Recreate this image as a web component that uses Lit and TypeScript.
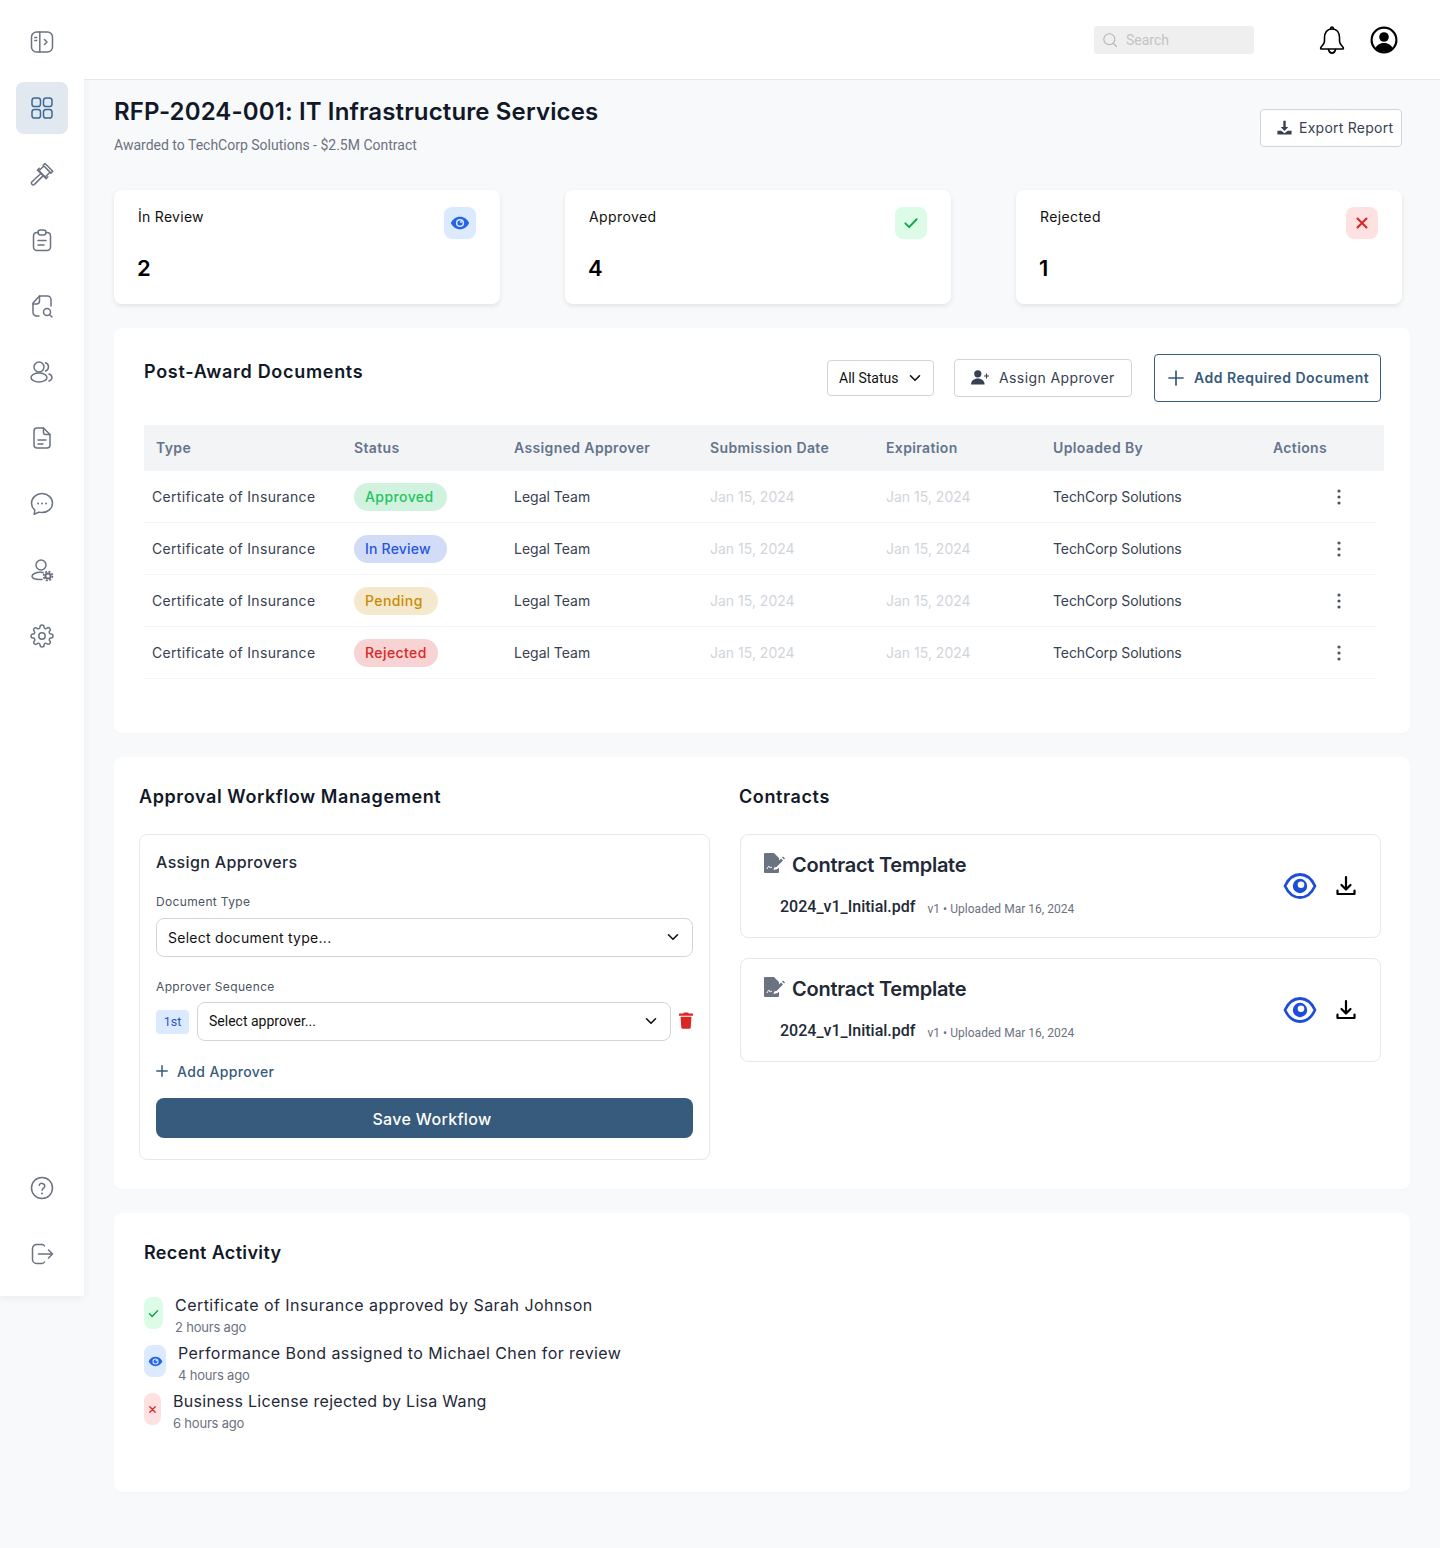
import { LitElement, html, css, svg } from "lit";
import { customElement } from "lit/decorators.js";

const ic = (size: number, vb: string, body: unknown, cls = "") =>
  html`<svg class=${cls} width=${size} height=${size} viewBox=${vb} fill="none" stroke="currentColor" stroke-width="1.5" stroke-linecap="round" stroke-linejoin="round">${body}</svg>`;

const sideIcons = {
  toggle: svg`<rect x="1.500" y="2" width="21" height="20" rx="5"/><path d="M9.800 2v20"/><path d="M4.800 7.500h1.800M4.800 10.500h1.800" /><path d="M14.500 9.500l2.500 2.500-2.500 2.500"/>`,
  grid: svg`<rect x="2" y="2" width="8.500" height="8.500" rx="2.600"/><rect x="13.500" y="2" width="8.500" height="8.500" rx="2.600"/><rect x="2" y="13.500" width="8.500" height="8.500" rx="2.600"/><rect x="13.500" y="13.500" width="8.500" height="8.500" rx="2.600"/>`,
  gavel: svg`<path d="M15 1.500l7.800 7.800-1.800 1.800-7.800-7.800z"/><path d="M13.300 4.500L9 8.800l6.200 6.200 4.300-4.300"/><path d="M7.500 8l8.600 8.600 1.800-1.800"/><path d="M7.500 8L9.300 6.200"/><path d="M10.800 11.500L1.800 20a1.800 1.800 0 0 0 2.400 2.600l8.800-8.700"/>`,
  clip: svg`<path d="M8 4.600H7A3.500 3.500 0 0 0 3.500 8v11A3.500 3.500 0 0 0 7 22.500h10a3.500 3.500 0 0 0 3.500-3.500V8A3.500 3.500 0 0 0 17 4.600h-1"/><rect x="8" y="2" width="8" height="5" rx="2.400"/><path d="M8 12.500h8M8 17h6"/>`,
  docsearch: svg`<path d="M9 22H6.500A3.500 3.500 0 0 1 3 18.500V9l6.500-7h8A3.500 3.500 0 0 1 21 5.500V12"/><path d="M3 10h3.500A3 3 0 0 0 9.500 7V2"/><circle cx="17" cy="18" r="3.500"/><path d="M20 21l2 2"/>`,
  users: svg`<circle cx="9" cy="7" r="5"/><ellipse cx="9" cy="17.500" rx="8" ry="4.500"/><path d="M15.500 2.800a4.500 4.500 0 0 1 3 4.200 4.500 4.500 0 0 1-3 4"/><path d="M19 14a4 4 0 0 1 3 3.500 4 4 0 0 1-3 3.500"/>`,
  doc: svg`<path d="M13.500 2H7a3 3 0 0 0-3 3v14a3 3 0 0 0 3 3h10a3 3 0 0 0 3-3V8.500z"/><path d="M13.500 2v4.500a2 2 0 0 0 2 2H20"/><path d="M8 14h8M8 18h5"/>`,
  chat: svg`<path d="M12 1.500C6.200 1.500 1.500 5.800 1.500 11.200c0 2.800 1.300 5.100 3.300 6.800l-.6 4.200 4.800-2.100c1 .3 1.900.4 3 .4 5.800 0 10.500-4 10.500-9.300S17.800 1.500 12 1.500z"/><path d="M8 11.500h.1M12 11.500h.1M16 11.500h.1" stroke-width="1.800"/>`,
  usergear: svg`<circle cx="11" cy="7" r="5"/><path d="M13 14.500c-1-.2-1.700-.2-2.500-.2-4.500 0-8.500 1.800-8.500 4 0 2 3 3.200 8 3.200h2"/><circle cx="18" cy="18" r="2.600" stroke-width="2"/><circle cx="18" cy="18" r="4.400" stroke-width="1.700" stroke-dasharray="2 1.450" stroke-linecap="butt"/>`,
  gear: svg`<circle cx="12" cy="12" r="3.200"/><path d="M19.400 15a1.650 1.650 0 0 0 .33 1.820l.06.06a2 2 0 0 1 0 2.830 2 2 0 0 1-2.830 0l-.06-.06a1.650 1.650 0 0 0-1.820-.33 1.650 1.650 0 0 0-1 1.510V21a2 2 0 0 1-2 2 2 2 0 0 1-2-2v-.09A1.650 1.650 0 0 0 9 19.400a1.650 1.650 0 0 0-1.820.33l-.06.06a2 2 0 0 1-2.830 0 2 2 0 0 1 0-2.830l.06-.06a1.650 1.650 0 0 0 .33-1.820 1.650 1.650 0 0 0-1.510-1H3a2 2 0 0 1-2-2 2 2 0 0 1 2-2h.09A1.650 1.650 0 0 0 4.600 9a1.650 1.650 0 0 0-.33-1.820l-.06-.06a2 2 0 0 1 0-2.830 2 2 0 0 1 2.830 0l.06.06a1.650 1.650 0 0 0 1.820.33H9a1.650 1.650 0 0 0 1-1.510V3a2 2 0 0 1 2-2 2 2 0 0 1 2 2v.09a1.650 1.650 0 0 0 1 1.510 1.650 1.650 0 0 0 1.820-.33l.06-.06a2 2 0 0 1 2.830 0 2 2 0 0 1 0 2.830l-.06.06a1.650 1.650 0 0 0-.33 1.820V9a1.650 1.650 0 0 0 1.510 1H21a2 2 0 0 1 2 2 2 2 0 0 1-2 2h-.09a1.650 1.650 0 0 0-1.510 1z"/>`,
  help: svg`<circle cx="12" cy="12" r="10.500"/><path d="M9.200 9.200a2.900 2.900 0 0 1 5.600 1c0 1.900-2.800 2.300-2.800 4"/><path d="M12 17.500h.01" stroke-width="2"/>`,
  logout: svg`<path d="M12 2.500H6.500A4 4 0 0 0 2.500 6.500v11a4 4 0 0 0 4 4H12a3 3 0 0 0 2.500-1.500"/><path d="M14.500 4a3 3 0 0 0-2.500-1.500"/><path d="M8.500 12h14M18.500 8l4 4-4 4"/>`,
};

const eyeSolid = (s: number) => html`<svg width=${s} height=${s} viewBox="0 0 24 24"><path fill="currentColor" fill-rule="evenodd" d="M12 4.500c5 0 9 3.200 11 7.500-2 4.300-6 7.500-11 7.500S3 16.300 1 12c2-4.300 6-7.500 11-7.500zm0 2.600a4.900 4.900 0 1 0 0 9.800 4.900 4.900 0 0 0 0-9.800z"/><circle cx="12" cy="12" r="3.100" fill="currentColor"/><circle cx="13.200" cy="10.800" r="1.200" fill="#dbeafe"/></svg>`;
const check = (s: number) => html`<svg width=${s} height=${s} viewBox="0 0 24 24" fill="none" stroke="currentColor" stroke-width="2.600" stroke-linecap="round" stroke-linejoin="round"><path d="M4.500 12.500l5 5 10-10.500"/></svg>`;
const cross = (s: number) => html`<svg width=${s} height=${s} viewBox="0 0 24 24" fill="none" stroke="currentColor" stroke-width="2.800" stroke-linecap="round"><path d="M6 6l12 12M18 6L6 18"/></svg>`;
const chevron = html`<svg class="chev" width="12" height="12" viewBox="0 0 12 12" fill="none" stroke="currentColor" stroke-width="1.600" stroke-linecap="round" stroke-linejoin="round"><path d="M1.500 3.800 6 8.300l4.500-4.500"/></svg>`;

const rows = [
  ["Approved", "approved"],
  ["In Review", "review"],
  ["Pending", "pending"],
  ["Rejected", "rejected"],
];

@customElement("app-root")
export class AppRoot extends LitElement {
  static styles = css`
    :host { display: block; width: 1440px; min-height: 1548px; background: #f8f9fb; font-family: Inter, "Liberation Sans", sans-serif; color: #1f2937; }
    * { box-sizing: border-box; }
    .page { display: flex; align-items: flex-start; }
    aside { width: 84px; height: 1296px; background: #fff; box-shadow: 0 2px 8px rgba(0,0,0,.06); padding: 16px; display: flex; flex-direction: column; justify-content: space-between; flex: none; position: relative; z-index: 1; }
    .side-group { display: flex; flex-direction: column; gap: 14px; }
    .side { width: 52px; height: 52px; border-radius: 8px; display: flex; align-items: center; justify-content: center; color: #6b7280; }
    .side.active { background: #e2e8f0; color: #3b6a96; }
    main { flex: 1; min-width: 0; }
    header { height: 80px; background: #fff; border-bottom: 1px solid #e5e7eb; display: flex; align-items: center; padding-left: 1010px; position: relative; z-index: 2; }
    .search { width: 160px; height: 28px; background: #efefef; border-radius: 4px; display: flex; align-items: center; gap: 9px; padding-left: 9px; color: #c4c4c4; font-family: Roboto, sans-serif; font-size: 14px; }
    .search svg { color: #b5b5b5; }
    .bell { margin-left: 64px; display: flex; color: #000; }
    .avatar { margin-left: 24px; display: flex; color: #000; }
    .content { padding: 13px 30px 56px; }
    .head { display: flex; justify-content: space-between; align-items: flex-start; padding-right: 8px; height: 70px; }
    h1 { margin: 1px 0 0; font-size: 24px; line-height: 36px; font-weight: 600; color: #111827; letter-spacing: .13px; }
    .sub { margin-top: 6px; font-family: Roboto, sans-serif; font-size: 14px; line-height: 18px; color: #6b7280; }
    .export { width: 142px; height: 38px; margin-top: 16px; border: 1px solid #d1d5db; border-radius: 4px; background: #fff; display: flex; align-items: center; gap: 6px; padding: 0 0 2px 15px; color: #374151; font-size: 14px; letter-spacing: .25px; }
    .stats { display: grid; grid-template-columns: 386px 386px 386px; gap: 65px; margin-top: 27px; }
    .stat { height: 114px; background: #fff; border-radius: 8px; box-shadow: 0 2px 5px rgba(0,0,0,.09); padding: 17px 24px 0; display: flex; justify-content: space-between; align-items: flex-start; }
    .stat .lab { font-size: 14px; line-height: 20px; color: #111; letter-spacing: .4px; }
    .stat .lab.first { letter-spacing: .28px; }
    .stat .num { margin: 29px 0 0 -1px; font-size: 22px; line-height: 24px; font-weight: 600; color: #000; }
    .badge { width: 32px; height: 32px; border-radius: 8px; display: flex; align-items: center; justify-content: center; }
    .blue { background: #dbeafe; color: #2563eb; }
    .green { background: #dcfce7; color: #16a34a; }
    .red { background: #fee2e2; color: #dc2626; }
    .panel { background: #fff; border-radius: 8px; box-shadow: 0 1px 2px rgba(0,0,0,.025); }
    .docs { margin-top: 24px; height: 405px; padding: 26px 29px 0 30px; }
    .docs-head { display: flex; justify-content: space-between; align-items: flex-start; height: 48px; }
    h2 { margin: 0; font-size: 18px; line-height: 28px; font-weight: 600; color: #111827; letter-spacing: .6px; }
    .docs-head h2 { margin-top: 4px; letter-spacing: .7px; }
    .actions { display: flex; align-items: center; gap: 20px; height: 48px; }
    .btn { display: flex; align-items: center; border: 1px solid #d1d5db; border-radius: 4px; background: #fff; font-size: 14px; padding-bottom: 1px; }
    .allstatus { width: 107px; height: 36px; padding: 0 12px 0 11px; justify-content: space-between; color: #111; font-family: Roboto, sans-serif; }
    .assign { width: 178px; height: 38px; padding-left: 16px; gap: 9px; color: #374151; letter-spacing: .4px; }
    .add { width: 227px; height: 48px; margin-left: 2px; padding-left: 12px; gap: 9px; border-color: #365b7c; color: #365b7c; font-weight: 600; letter-spacing: .5px; }
    .table { margin-top: 23px; width: 1240px; }
    .tr { display: grid; grid-template-columns: 210px 160px 196px 176px 167px 220px 1fr; align-items: center; }
    .th { height: 46px; background: #f3f4f6; font-size: 14px; font-weight: 600; color: #64748b; letter-spacing: .37px; padding-bottom: 2px; }
    .th > div:first-child { padding-left: 12px; }
    .td { width: 1232px; height: 52px; border-bottom: 1px solid #f3f4f6; font-size: 14px; color: #374151; letter-spacing: .32px; }
    .td > div:first-child { padding-left: 8px; }
    .legal { letter-spacing: 0; }
    .by { letter-spacing: -.08px; }
    .date { color: #d1d5db; letter-spacing: 0; }
    .pill { height: 28px; border-radius: 14px; display: flex; align-items: center; padding-left: 11px; font-size: 14px; font-weight: 500; letter-spacing: .42px; }
    .pill.approved { width: 93px; background: #d1f2df; color: #22c55e; }
    .pill.review { width: 93px; background: #d3dcf7; color: #2556e0; letter-spacing: .2px; }
    .pill.pending { width: 84px; background: #f5e9cd; color: #ca8a04; }
    .pill.rejected { width: 84px; background: #f8d3d3; color: #dc2626; }
    .kebab { padding-left: 58px; display: flex; color: #4b5563; }
    .workflow { margin-top: 24px; height: 432px; padding: 26px 29px 0 25px; display: grid; grid-template-columns: 571px 641px; gap: 30px; }
    .wf-col h2 { height: 28px; margin-bottom: 23px; }
    .contracts-col h2 { margin-left: -1px; }
    .box { border: 1px solid #e5e7eb; border-radius: 8px; background: #fff; }
    .approvers { height: 326px; padding: 15px 16px 16px; }
    h3 { margin: 0; font-size: 16px; line-height: 24px; font-weight: 500; color: #1f2937; letter-spacing: .35px; }
    label { display: block; font-size: 12px; line-height: 16px; color: #4b5563; letter-spacing: .35px; }
    .l1 { margin-top: 20px; }
    .l2 { margin-top: 22px; }
    .select { height: 39px; border: 1px solid #d1d5db; border-radius: 8px; display: flex; align-items: center; justify-content: space-between; padding: 0 13px 1px 11px; font-size: 14px; color: #111; letter-spacing: .27px; background: #fff; }
    .s1 { margin-top: 8px; }
    .seq { display: flex; align-items: center; margin-top: 7px; }
    .ord { flex: none; width: 33px; height: 24px; background: #dbeafe; border-radius: 4px; color: #2d55c8; font-family: Roboto, sans-serif; font-size: 12.500px; display: flex; align-items: center; justify-content: center; margin-right: 8px; }
    .seq .select { flex: none; width: 474px; padding-right: 13px; font-family: Roboto, sans-serif; letter-spacing: 0; }
    .trash { flex: none; margin-left: 8px; margin-bottom: 3px; display: flex; color: #dc2626; }
    .addappr { display: flex; align-items: center; gap: 9px; margin-top: 20px; height: 20px; color: #365b7c; font-size: 14px; font-weight: 500; letter-spacing: .38px; }
    .save { margin-top: 17px; height: 40px; border-radius: 8px; background: #365b7c; color: #fff; display: flex; align-items: center; justify-content: center; padding: 1px 0 0 15px; font-size: 16px; font-weight: 500; letter-spacing: .33px; }
    .cards { display: flex; flex-direction: column; gap: 20px; }
    .contract { height: 104px; padding: 17px 22px 0 23px; display: flex; justify-content: space-between; }
    .c-title { display: flex; align-items: flex-start; gap: 6px; }
    .c-name { font-size: 20px; line-height: 28px; font-weight: 600; color: #1f2937; margin-top: -1px; letter-spacing: -.25px; }
    .c-file { display: flex; align-items: baseline; margin-left: 16px; margin-top: 16px; font-family: Roboto, sans-serif; }
    .fname { font-size: 16px; line-height: 24px; font-weight: 500; color: #1f2937; }
    .meta { margin-left: 12px; font-size: 12px; color: #6b7280; position: relative; top: 1px; letter-spacing: .03px; }
    .c-actions { display: flex; align-items: center; gap: 17px; height: 68px; }
    .eye { display: flex; color: #1d4ed8; }
    .dl { display: flex; color: #000; }
    .recent { margin-top: 24px; height: 279px; padding: 26px 30px 0; }
    .recent h2 { letter-spacing: .35px; }
    .feed { margin-top: 29px; display: flex; flex-direction: column; gap: 0; }
    .item { display: flex; align-items: flex-start; height: 48px; gap: 12px; }
    .dot { height: 32px; border-radius: 8px; display: flex; align-items: center; justify-content: center; margin-top: 1px; }
    .i-txt { font-size: 16px; line-height: 18px; color: #1f2937; letter-spacing: .42px; }
    .i-txt.t1 { letter-spacing: .46px; }
    .i-txt.t3 { letter-spacing: .29px; }
    .i-sub { margin-top: 4px; font-size: 13px; line-height: 18px; color: #6b7280; letter-spacing: -.2px; }
  `;

  private side(icon: unknown, active = false) {
    return html`<div class="side ${active ? "active" : ""}">${ic(24, "0 0 24 24", icon)}</div>`;
  }

  private download(s: number) {
    return html`<svg width=${s} height=${s} viewBox="0 0 24 24" fill="none" stroke="currentColor" stroke-width="2.200" stroke-linecap="round" stroke-linejoin="round"><path d="M12 3v12M7.500 11l4.500 4.500 4.500-4.500"/><path d="M3.500 16.500v3.500h17v-3.500"/></svg>`;
  }

  private contract() {
    return html`<div class="box contract">
      <div>
        <div class="c-title">
          <svg width="22" height="22" viewBox="0 0 22 22" fill="#6b7280"><path d="M1 1h9l5 5v3.500l-4.500 4.500-1 4 4-1 1.500-1.500V20a1 1 0 0 1-1 1H1a1 1 0 0 1-1-1V2a1 1 0 0 1 1-1z"/><path d="M17 6.500l2 2-6.500 6.500-2.500.5.500-2.500zM18 5.500l1-1 2 2-1 1z"/><path d="M3 17c1-2 1.500-3 2-3s.5 2 1 2 1-1 2-1" fill="none" stroke="#fff" stroke-width="1"/></svg>
          <div class="c-name">Contract Template</div>
        </div>
        <div class="c-file"><span class="fname">2024_v1_Initial.pdf</span><span class="meta">v1 • Uploaded Mar 16, 2024</span></div>
      </div>
      <div class="c-actions">
        <span class="eye"><svg width="34" height="34" viewBox="0 0 34 34"><path fill="none" stroke="currentColor" stroke-width="2.800" stroke-linejoin="round" d="M2 17C5.500 9.500 10.500 5.500 17 5.500S28.500 9.500 32 17c-3.500 7.500-8.500 11.500-15 11.500S5.500 24.500 2 17z"/><circle cx="17" cy="17" r="7.200" fill="currentColor"/><circle cx="18" cy="15.800" r="3.300" fill="#fff"/></svg></span>
        <span class="dl">${this.download(24)}</span>
      </div>
    </div>`;
  }

  private feedItem(cls: string, w: number, icon: unknown, text: string, sub: string, tcls: string) {
    return html`<div class="item"><span class="dot ${cls}" style="width:${w}px">${icon}</span><div><div class="i-txt ${tcls}">${text}</div><div class="i-sub">${sub}</div></div></div>`;
  }

  render() {
    return html`<div class="page">
      <aside>
        <div class="side-group">
          ${this.side(sideIcons.toggle)}
          ${this.side(sideIcons.grid, true)}
          ${this.side(sideIcons.gavel)}
          ${this.side(sideIcons.clip)}
          ${this.side(sideIcons.docsearch)}
          ${this.side(sideIcons.users)}
          ${this.side(sideIcons.doc)}
          ${this.side(sideIcons.chat)}
          ${this.side(sideIcons.usergear)}
          ${this.side(sideIcons.gear)}
        </div>
        <div class="side-group">
          ${this.side(sideIcons.help)}
          ${this.side(sideIcons.logout)}
        </div>
      </aside>
      <main>
        <header>
          <div class="search">
            <svg width="14" height="14" viewBox="0 0 14 14" fill="none" stroke="currentColor" stroke-width="1.100" stroke-linecap="round"><circle cx="6.300" cy="6.300" r="5.500"/><path d="M10.500 10.500l3 3"/></svg>
            <span>Search</span>
          </div>
          <span class="bell"><svg width="28" height="28" viewBox="0 0 28 28" fill="none" stroke="currentColor" stroke-width="1.600" stroke-linejoin="round" stroke-linecap="round"><path d="M14 3C8.500 3 6.500 7.500 6.500 11.500V15C6.500 18 4 20 2.800 21.500 2.300 22.200 2.800 23 3.600 23H24.400C25.200 23 25.700 22.200 25.200 21.500 24 20 21.500 18 21.500 15V11.500C21.500 7.500 19.500 3 14 3z"/><path d="M12.600 3c0-2.600 2.800-2.600 2.800 0"/><path d="M10.500 23.500c.5 2.400 2 3.600 3.500 3.600s3-1.200 3.500-3.600"/></svg></span>
          <span class="avatar"><svg width="28" height="28" viewBox="0 0 28 28"><circle cx="14" cy="14" r="12.400" fill="none" stroke="currentColor" stroke-width="2.200"/><circle cx="14" cy="11" r="4.800" fill="currentColor"/><path d="M5.500 22c1.500-3.500 5-5 8.500-5s7 1.500 8.500 5c-2 2.500-5 3.500-8.500 3.500S7.500 24.500 5.500 22z" fill="currentColor"/></svg></span>
        </header>
        <div class="content">
          <div class="head">
            <div>
              <h1>RFP-2024-001: IT Infrastructure Services</h1>
              <div class="sub">Awarded to TechCorp Solutions - $2.5M Contract</div>
            </div>
            <div class="export">
              <svg width="17" height="17" viewBox="0 0 24 24" fill="currentColor"><path d="M10.300 2.500h3.400v8.700h3.700L12 17l-5.400-5.800h3.700z"/><path d="M2 16.500h5.500l4.500 3.500 4.500-3.500H22V22H2z"/></svg>
              <span>Export Report</span>
            </div>
          </div>

          <div class="stats">
            <div class="stat"><div><div class="lab first">İn Review</div><div class="num">2</div></div><div class="badge blue">${eyeSolid(20)}</div></div>
            <div class="stat"><div><div class="lab">Approved</div><div class="num">4</div></div><div class="badge green">${check(18)}</div></div>
            <div class="stat"><div><div class="lab">Rejected</div><div class="num">1</div></div><div class="badge red">${cross(18)}</div></div>
          </div>

          <section class="panel docs">
            <div class="docs-head">
              <h2>Post-Award Documents</h2>
              <div class="actions">
                <div class="btn allstatus"><span>All Status</span>${chevron}</div>
                <div class="btn assign">
                  <svg width="19" height="15" viewBox="0 0 19 15" fill="currentColor"><circle cx="6.800" cy="3.800" r="3.600"/><path d="M0 14.500c0-3.800 3-6 6.800-6s6.800 2.200 6.800 6z"/><path d="M15.500 3.500v5M13 6h5" stroke="currentColor" stroke-width="1.200" fill="none"/></svg>
                  <span>Assign Approver</span>
                </div>
                <div class="btn add">
                  <svg width="18" height="18" viewBox="0 0 18 18" fill="none" stroke="currentColor" stroke-width="1.700" stroke-linecap="round"><path d="M9 2v14M2 9h14"/></svg>
                  <span>Add Required Document</span>
                </div>
              </div>
            </div>
            <div class="table">
              <div class="tr th"><div>Type</div><div>Status</div><div>Assigned Approver</div><div>Submission Date</div><div>Expiration</div><div>Uploaded By</div><div>Actions</div></div>
              ${rows.map(([label, cls]) => html`<div class="tr td">
                <div>Certificate of Insurance</div>
                <div><span class="pill ${cls}">${label}</span></div>
                <div class="legal">Legal Team</div>
                <div class="date">Jan 15, 2024</div>
                <div class="date">Jan 15, 2024</div>
                <div class="by">TechCorp Solutions</div>
                <div class="kebab"><svg width="16" height="16" viewBox="0 0 16 16" fill="currentColor"><circle cx="8" cy="2" r="1.600"/><circle cx="8" cy="8" r="1.600"/><circle cx="8" cy="14" r="1.600"/></svg></div>
              </div>`)}
            </div>
          </section>

          <section class="panel workflow">
            <div class="wf-col">
              <h2>Approval Workflow Management</h2>
              <div class="box approvers">
                <h3>Assign Approvers</h3>
                <label class="l1">Document Type</label>
                <div class="select s1"><span>Select document type...</span>${chevron}</div>
                <label class="l2">Approver Sequence</label>
                <div class="seq">
                  <span class="ord">1st</span>
                  <div class="select"><span>Select approver...</span>${chevron}</div>
                  <span class="trash"><svg width="14" height="17" viewBox="0 0 16 18" preserveAspectRatio="none" fill="currentColor"><path d="M5.500 0.500h5l.6 1.200H15.500a.7.700 0 0 1 0 2.300H.5a.7.700 0 0 1 0-2.300h4.400z"/><path d="M1.800 5h12.400l-.8 11.400a1.500 1.500 0 0 1-1.500 1.400H4.100a1.500 1.500 0 0 1-1.500-1.400z"/></svg></span>
                </div>
                <div class="addappr">
                  <svg width="12" height="12" viewBox="0 0 12 12" fill="none" stroke="currentColor" stroke-width="1.500" stroke-linecap="round"><path d="M6 .8v10.400M.8 6h10.400"/></svg>
                  <span>Add Approver</span>
                </div>
                <div class="save">Save Workflow</div>
              </div>
            </div>
            <div class="wf-col contracts-col">
              <h2>Contracts</h2>
              <div class="cards">${this.contract()}${this.contract()}</div>
            </div>
          </section>

          <section class="panel recent">
            <h2>Recent Activity</h2>
            <div class="feed">
              ${this.feedItem("green", 19, check(13), "Certificate of Insurance approved by Sarah Johnson", "2 hours ago", "t1")}
              ${this.feedItem("blue", 22, eyeSolid(15), "Performance Bond assigned to Michael Chen for review", "4 hours ago", "t2")}
              ${this.feedItem("red", 17, cross(11), "Business License rejected by Lisa Wang", "6 hours ago", "t3")}
            </div>
          </section>
        </div>
      </main>
    </div>`;
  }
}
